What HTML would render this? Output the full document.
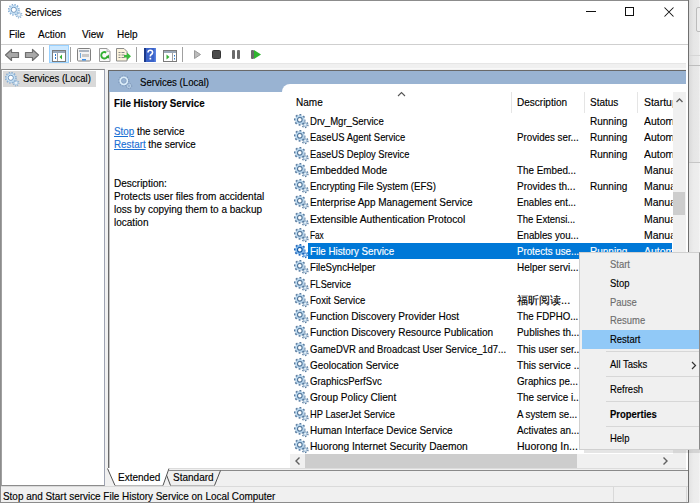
<!DOCTYPE html>
<html><head><meta charset="utf-8">
<style>
*{margin:0;padding:0;box-sizing:border-box}
html,body{width:700px;height:503px;overflow:hidden;background:#fff}
body{position:relative;font-family:"Liberation Sans",sans-serif;font-size:11px;letter-spacing:0;color:#000}
.a{position:absolute;white-space:nowrap}
.r{line-height:13px}
.r,.t{transform:scaleX(0.91);transform-origin:0 0;-webkit-text-stroke:0.15px}
.gear{width:15px;height:15px}
</style></head><body>
<svg width="0" height="0" style="position:absolute">
<defs>
<symbol id="gear" viewBox="0 0 15 15">
<circle cx="11.1" cy="10.7" r="2.9" fill="none" stroke="#5d7fa2" stroke-width="1.3" stroke-dasharray="1.5 1.54"/>
<circle cx="11.1" cy="10.7" r="2.1" fill="#b9d3e8" stroke="#5d7fa2" stroke-width="0.4"/>
<circle cx="11.1" cy="10.7" r="0.75" fill="#fff"/>
<circle cx="5.8" cy="5.8" r="5.0" fill="none" stroke="#57799d" stroke-width="1.7" stroke-dasharray="1.85 2.07" stroke-dashoffset="0.9"/>
<circle cx="5.8" cy="5.8" r="4.3" fill="#c6e3f8" stroke="#7fa6cb" stroke-width="0.5"/>
<circle cx="5.8" cy="5.8" r="2.35" fill="#fff" stroke="#587a9c" stroke-width="1.2"/>
</symbol>
<symbol id="gears" viewBox="0 0 15 15">
<circle cx="11.1" cy="10.7" r="2.9" fill="none" stroke="#2a72c6" stroke-width="1.3" stroke-dasharray="1.5 1.54"/>
<circle cx="11.1" cy="10.7" r="2.1" fill="#7ab4ea" stroke="#2a72c6" stroke-width="0.4"/>
<circle cx="11.1" cy="10.7" r="0.75" fill="#fff"/>
<circle cx="5.8" cy="5.8" r="5.0" fill="none" stroke="#1e64b8" stroke-width="1.7" stroke-dasharray="1.85 2.07" stroke-dashoffset="0.9"/>
<circle cx="5.8" cy="5.8" r="4.3" fill="#8cc4f2" stroke="#2f7fd4" stroke-width="0.5"/>
<circle cx="5.8" cy="5.8" r="2.35" fill="#fff" stroke="#155aa6" stroke-width="1.2"/>
</symbol>
<symbol id="gearh" viewBox="0 0 15 15">
<circle cx="11" cy="10.9" r="2.7" fill="none" stroke="#8199b8" stroke-width="1.1" stroke-dasharray="0.9 1.3"/>
<circle cx="11" cy="10.9" r="1.7" fill="none" stroke="#b9cfe4" stroke-width="0.9"/>
<circle cx="5.8" cy="5.8" r="5.0" fill="none" stroke="#7d99bb" stroke-width="1.3" stroke-dasharray="1.3 1.32"/>
<circle cx="5.8" cy="5.8" r="3.5" fill="none" stroke="#dcedf9" stroke-width="1.8"/>
<circle cx="5.8" cy="5.8" r="2.4" fill="none" stroke="#7f9cbd" stroke-width="0.6"/>
</symbol>
<symbol id="gearl" viewBox="0 0 15 15">
<circle cx="11" cy="10.9" r="2.9" fill="none" stroke="#8fb0d0" stroke-width="1.2" stroke-dasharray="0.95 1.33"/>
<circle cx="11" cy="10.9" r="2.2" fill="#c8def0" stroke="#8fb0d0" stroke-width="0.5"/>
<circle cx="11" cy="10.9" r="0.8" fill="#fff"/>
<circle cx="5.8" cy="5.8" r="5.2" fill="none" stroke="#86acd2" stroke-width="1.5" stroke-dasharray="1.35 1.37"/>
<circle cx="5.8" cy="5.8" r="4.4" fill="#cfe8fa" stroke="#95bde0" stroke-width="0.6"/>
<circle cx="5.8" cy="5.8" r="2.6" fill="#fff" stroke="#7196bd" stroke-width="1.0"/>
</symbol>
</defs></svg>

<!-- outside strip -->
<div class="a" style="left:689px;top:0;width:11px;height:162px;background:linear-gradient(to right,#d9d9d9,#e6e6e6 40%,#e9e9e9 90%,#f6f6f6)"></div>
<div class="a" style="left:689px;top:162px;width:11px;height:341px;background:linear-gradient(to right,#e2e2e2,#ececec 40%,#eeeeee 90%,#f8f8f8)"></div>
<div class="a" style="left:689px;top:162px;width:11px;height:1px;background:#c6c6c6"></div>
<div class="a" style="left:689px;top:55px;width:11px;height:1px;background:#d6d6d6"></div>
<div class="a" style="left:689px;top:65px;width:11px;height:1px;background:#bdbdbd"></div>
<div class="a" style="left:696px;top:7px;width:6px;height:25px;border:1px solid #bcbcbc;border-radius:2px;background:#eeeeee"></div>
<!-- window borders -->
<div class="a" style="left:0;top:0;width:689px;height:1px;background:#8c8c8c"></div>
<div class="a" style="left:0;top:0;width:1px;height:503px;background:#8c8c8c"></div>
<div class="a" style="left:688px;top:0;width:1px;height:503px;background:#6f6f6f"></div>

<!-- title -->
<div class="a r" style="left:25px;top:6px;transform:scaleX(0.865)">Services</div>


<!-- title icon -->
<svg class="a" style="left:8px;top:4px" width="15" height="15"><use href="#gearl"/></svg>
<!-- window controls -->
<div class="a" style="left:586px;top:11px;width:10px;height:1px;background:#111"></div>
<div class="a" style="left:625px;top:7px;width:9px;height:9px;border:1px solid #111"></div>
<svg class="a" style="left:663px;top:6px" width="12" height="12"><path d="M1.5 1.5 L10.5 10.5 M10.5 1.5 L1.5 10.5" stroke="#111" stroke-width="1.05"/></svg>

<!-- toolbar -->
<svg class="a" style="left:4px;top:48px" width="16" height="14"><path d="M1.5 7 L7.5 1.5 L7.5 4.5 L14.5 4.5 L14.5 9.5 L7.5 9.5 L7.5 12.5 Z" fill="#a8a8a8" stroke="#6e6e6e" stroke-width="1.2" stroke-linejoin="round"/></svg>
<svg class="a" style="left:24px;top:48px" width="16" height="14"><path d="M14.5 7 L8.5 1.5 L8.5 4.5 L1.5 4.5 L1.5 9.5 L8.5 9.5 L8.5 12.5 Z" fill="#a8a8a8" stroke="#6e6e6e" stroke-width="1.2" stroke-linejoin="round"/></svg>
<div class="a" style="left:43px;top:47px;width:1px;height:15px;background:#a0a0a0"></div>
<div class="a" style="left:49px;top:45px;width:20px;height:18px;background:#cce8ff;border:1px solid #99d1ff"></div>
<svg class="a" style="left:52px;top:50px" width="14" height="12"><rect x="0.5" y="0.5" width="13" height="11" fill="#fff" stroke="#7a7a7a"/><rect x="1" y="1" width="12" height="2" fill="#9aa8b8"/><rect x="3" y="4" width="1" height="2" fill="#2a7ad0"/><rect x="3" y="7" width="1" height="2" fill="#2a7ad0"/><rect x="5" y="3" width="1" height="8" fill="#a0a0a0"/><path d="M7.5 7 L10 4.5 L10 9.5 Z" fill="#35b035"/></svg>
<div class="a" style="left:70px;top:47px;width:1px;height:15px;background:#a0a0a0"></div>
<svg class="a" style="left:77px;top:48px" width="15" height="14"><rect x="0.5" y="0.5" width="13" height="12.5" rx="1" fill="#f4f4f4" stroke="#808080"/><rect x="2" y="2" width="10" height="2" fill="#aab4c0"/><rect x="3" y="5" width="1" height="5" fill="#6fa8dc"/><rect x="5" y="6" width="7" height="3" fill="#c8c8c8"/><rect x="5" y="11" width="4" height="1.5" fill="#3a8ee6"/></svg>
<svg class="a" style="left:98px;top:48px" width="14" height="14"><path d="M1.5 0.5 H9 L12 3.5 V13.5 H1.5 Z" fill="#fafafa" stroke="#9a9a9a"/><path d="M9 0.5 V3.5 H12" fill="#e0e0e0" stroke="#b0b0b0" stroke-width="0.8"/><path d="M8.2 4.6 A3.2 3.2 0 1 0 9.6 7.8" fill="none" stroke="#33b133" stroke-width="1.9"/><path d="M7.6 9.6 L10.8 6.6 L11.2 10.6 Z" fill="#2ea52e"/></svg>
<svg class="a" style="left:116px;top:48px" width="16" height="14"><path d="M0.5 0.5 H8 L11 3.5 V13 H0.5 Z" fill="#fbf3dc" stroke="#8a8a8a"/><rect x="2.5" y="4" width="2" height="1" fill="#888"/><rect x="5.5" y="4" width="3" height="1" fill="#888"/><rect x="2.5" y="6.5" width="2" height="1" fill="#888"/><rect x="5.5" y="6.5" width="3" height="1" fill="#888"/><rect x="2.5" y="9" width="2" height="1" fill="#888"/><rect x="5.5" y="9" width="3" height="1" fill="#888"/><path d="M8 7 H11 V4.5 L15 8.3 L11 12 V9.5 H8 Z" fill="#3cba3c"/></svg>
<div class="a" style="left:136px;top:47px;width:1px;height:15px;background:#a0a0a0"></div>
<svg class="a" style="left:144px;top:48px" width="12" height="14"><rect x="0" y="0" width="12" height="14" fill="#3b63c9"/><rect x="0" y="0" width="2" height="14" fill="#1c3a8a"/><rect x="10.5" y="0" width="1.5" height="14" fill="#5b83e0"/><path d="M4 4.5 Q4 2.3 6.3 2.3 Q8.6 2.3 8.6 4.4 Q8.6 5.8 7 6.7 Q6.3 7.2 6.3 8.6" fill="none" stroke="#fff" stroke-width="1.6"/><rect x="5.5" y="9.8" width="1.7" height="1.7" fill="#fff"/></svg>
<svg class="a" style="left:163px;top:50px" width="15" height="12"><rect x="0.5" y="0.5" width="13" height="11" fill="#fff" stroke="#7a7a7a"/><rect x="1" y="1" width="12" height="2" fill="#9aa8b8"/><rect x="9" y="3" width="1" height="8" fill="#a0a0a0"/><rect x="11" y="5" width="1" height="1.5" fill="#2a7ad0"/><rect x="11" y="8" width="1" height="1.5" fill="#2a7ad0"/><path d="M3.5 4.5 L6.5 7 L3.5 9.5 Z" fill="#35b035"/></svg>
<div class="a" style="left:182px;top:47px;width:1px;height:15px;background:#a0a0a0"></div>
<svg class="a" style="left:194px;top:50px" width="8" height="10"><path d="M0.5 0.5 L6.5 4.5 L0.5 8.5 Z" fill="#bcbcbc" stroke="#9a9a9a"/></svg>
<div class="a" style="left:212px;top:50px;width:9px;height:9px;background:#4a4a4a;border-radius:1.5px;border:1px solid #333"></div>
<div class="a" style="left:232px;top:50px;width:3px;height:9px;background:#6a6a6a;border-radius:1px"></div>
<div class="a" style="left:237px;top:50px;width:3px;height:9px;background:#6a6a6a;border-radius:1px"></div>
<div class="a" style="left:251px;top:50px;width:3px;height:9px;background:#6a6a6a;border-radius:1px"></div>
<svg class="a" style="left:254px;top:50px" width="8" height="10"><path d="M0 0 L7 4.5 L0 9 Z" fill="#2fb52f"/></svg>

<!-- menu -->
<div class="a r" style="left:9px;top:28px">File</div>
<div class="a r" style="left:38px;top:28px">Action</div>
<div class="a r" style="left:82px;top:28px">View</div>
<div class="a r" style="left:117px;top:28px">Help</div>
<div class="a" style="left:1px;top:44px;width:687px;height:1px;background:#cfcfcf"></div>

<!-- toolbar bottom band -->
<div class="a" style="left:1px;top:63px;width:687px;height:6px;background:#f0f0f0"></div>
<div class="a" style="left:1px;top:63px;width:687px;height:1px;background:#e6e6e6"></div>
<div class="a" style="left:105px;top:68px;width:583px;height:1px;background:#f8f8f8"></div>

<!-- gray area between panes & below -->
<div class="a" style="left:1px;top:69px;width:687px;height:433px;background:#f0f0f0"></div>

<!-- left pane -->
<div class="a" style="left:1px;top:69px;width:104px;height:417px;background:#fff;border:1px solid #8c8c8c;border-left-color:#a0a0a0;border-right-color:#9ea3b2"></div>
<div class="a" style="left:3px;top:71px;width:93px;height:16px;background:#d9d9d9"></div>
<svg class="a" style="left:5px;top:72px" width="15" height="15"><use href="#gearl"/></svg>
<div class="a t" style="left:23px;top:72px;transform:scaleX(0.86)">Services (Local)</div>

<!-- right pane -->
<div class="a" style="left:686px;top:63px;width:2px;height:407px;background:#fff"></div>
<div class="a" style="left:108px;top:70px;width:578px;height:398px;background:#fff;border-left:1px solid #696969"></div>
<div class="a" style="left:109px;top:70px;width:577px;height:1px;background:#696969"></div>
<div class="a" style="left:109px;top:71px;width:577px;height:21px;background:#99b3d2"></div>
<div class="a" style="left:282px;top:84px;width:404px;height:20px;background:#fff;border-top-left-radius:8px"></div>
<div class="a" style="left:109px;top:92px;width:1px;height:376px;background:#c4c4c4"></div>
<svg class="a" style="left:118px;top:75px" width="15" height="15"><use href="#gearh"/></svg>
<div class="a r" style="left:140px;top:76px;transform:scaleX(0.875)">Services (Local)</div>

<!-- description panel -->
<div class="a t" style="left:114px;top:97px;font-weight:bold;transform:scaleX(0.887)">File History Service</div>
<div class="a t" style="left:114px;top:125px;transform:scaleX(0.892)"><span style="color:#1a6fd4;text-decoration:underline">Stop</span> the service</div>
<div class="a t" style="left:114px;top:138px;transform:scaleX(0.892)"><span style="color:#1a6fd4;text-decoration:underline">Restart</span> the service</div>
<div class="a t" style="left:114px;top:177px;line-height:13px">Description:<br>Protects user files from accidental<br>loss by copying them to a backup<br>location</div>


<!-- list view -->
<div class="a" style="left:511px;top:92px;width:1px;height:21px;background:#e5e5e5"></div>
<div class="a" style="left:584px;top:92px;width:1px;height:21px;background:#e5e5e5"></div>
<div class="a" style="left:637px;top:92px;width:1px;height:21px;background:#e5e5e5"></div>
<div class="a r" style="left:296px;top:96px">Name</div>
<div class="a r" style="left:517px;top:96px">Description</div>
<div class="a r" style="left:590px;top:96px">Status</div>
<div class="a r" style="left:644px;top:96px;width:29.5px;overflow:hidden;transform:scaleX(0.95)">Startup</div>
<svg class="a" style="left:397px;top:91px" width="9" height="6"><path d="M1 5 L4.5 1.5 L8 5" fill="none" stroke="#555" stroke-width="1.1"/></svg>
<!--ROWS-->
<svg class="a" style="left:294px;top:114px" width="15" height="15"><use href="#gear"/></svg>
<div class="a r" style="left:310px;top:115px;color:#000;transform:scaleX(0.8674)">Drv_Mgr_Service</div>
<div class="a r" style="left:590px;top:115px;color:#000">Running</div>
<div class="a r" style="left:644px;top:115px;width:29.5px;overflow:hidden;color:#000;transform:scaleX(0.95)">Autom</div>
<svg class="a" style="left:294px;top:130px" width="15" height="15"><use href="#gear"/></svg>
<div class="a r" style="left:310px;top:131px;color:#000;transform:scaleX(0.8559)">EaseUS Agent Service</div>
<div class="a r" style="left:517px;top:131px;color:#000;transform:scaleX(0.8854)">Provides ser...</div>
<div class="a r" style="left:590px;top:131px;color:#000">Running</div>
<div class="a r" style="left:644px;top:131px;width:29.5px;overflow:hidden;color:#000;transform:scaleX(0.95)">Autom</div>
<svg class="a" style="left:294px;top:147px" width="15" height="15"><use href="#gear"/></svg>
<div class="a r" style="left:310px;top:148px;color:#000;transform:scaleX(0.8462)">EaseUS Deploy Srevice</div>
<div class="a r" style="left:590px;top:148px;color:#000">Running</div>
<div class="a r" style="left:644px;top:148px;width:29.5px;overflow:hidden;color:#000;transform:scaleX(0.95)">Autom</div>
<svg class="a" style="left:294px;top:163px" width="15" height="15"><use href="#gear"/></svg>
<div class="a r" style="left:310px;top:164px;color:#000;transform:scaleX(0.922)">Embedded Mode</div>
<div class="a r" style="left:517px;top:164px;color:#000;transform:scaleX(0.8946)">The Embed...</div>
<div class="a r" style="left:644px;top:164px;width:29.5px;overflow:hidden;color:#000;transform:scaleX(0.95)">Manua</div>
<svg class="a" style="left:294px;top:179px" width="15" height="15"><use href="#gear"/></svg>
<div class="a r" style="left:310px;top:180px;color:#000;transform:scaleX(0.8725)">Encrypting File System (EFS)</div>
<div class="a r" style="left:517px;top:180px;color:#000;transform:scaleX(0.91)">Provides th...</div>
<div class="a r" style="left:590px;top:180px;color:#000">Running</div>
<div class="a r" style="left:644px;top:180px;width:29.5px;overflow:hidden;color:#000;transform:scaleX(0.95)">Manua</div>
<svg class="a" style="left:294px;top:195px" width="15" height="15"><use href="#gear"/></svg>
<div class="a r" style="left:310px;top:196px;color:#000;transform:scaleX(0.9072)">Enterprise App Management Service</div>
<div class="a r" style="left:517px;top:196px;color:#000;transform:scaleX(0.8757)">Enables ent...</div>
<div class="a r" style="left:644px;top:196px;width:29.5px;overflow:hidden;color:#000;transform:scaleX(0.95)">Manua</div>
<svg class="a" style="left:294px;top:212px" width="15" height="15"><use href="#gear"/></svg>
<div class="a r" style="left:310px;top:213px;color:#000;transform:scaleX(0.9341)">Extensible Authentication Protocol</div>
<div class="a r" style="left:517px;top:213px;color:#000;transform:scaleX(0.8652)">The Extensi...</div>
<div class="a r" style="left:644px;top:213px;width:29.5px;overflow:hidden;color:#000;transform:scaleX(0.95)">Manua</div>
<svg class="a" style="left:294px;top:228px" width="15" height="15"><use href="#gear"/></svg>
<div class="a r" style="left:310px;top:229px;color:#000;transform:scaleX(0.7494)">Fax</div>
<div class="a r" style="left:517px;top:229px;color:#000;transform:scaleX(0.8854)">Enables you...</div>
<div class="a r" style="left:644px;top:229px;width:29.5px;overflow:hidden;color:#000;transform:scaleX(0.95)">Manua</div>
<div class="a" style="left:308px;top:243px;width:364px;height:16px;background:#0078d7"></div>
<svg class="a" style="left:294px;top:244px" width="15" height="15"><use href="#gears"/></svg>
<div class="a r" style="left:310px;top:245px;color:#fff;transform:scaleX(0.8878)">File History Service</div>
<div class="a r" style="left:517px;top:245px;color:#fff;transform:scaleX(0.8827)">Protects use...</div>
<div class="a r" style="left:590px;top:245px;color:#fff">Running</div>
<div class="a r" style="left:644px;top:245px;width:29.5px;overflow:hidden;color:#fff;transform:scaleX(0.95)">Autom</div>
<svg class="a" style="left:294px;top:260px" width="15" height="15"><use href="#gear"/></svg>
<div class="a r" style="left:310px;top:261px;color:#000;transform:scaleX(0.8779)">FileSyncHelper</div>
<div class="a r" style="left:517px;top:261px;color:#000;transform:scaleX(0.9055)">Helper servi...</div>
<svg class="a" style="left:294px;top:277px" width="15" height="15"><use href="#gear"/></svg>
<div class="a r" style="left:310px;top:278px;color:#000;transform:scaleX(0.8291)">FLService</div>
<svg class="a" style="left:294px;top:293px" width="15" height="15"><use href="#gear"/></svg>
<div class="a r" style="left:310px;top:294px;color:#000;transform:scaleX(0.8692)">Foxit Service</div>
<div class="a r" style="left:517px;top:294px;color:#000;transform:scaleX(1.001)">福昕阅读...</div>
<svg class="a" style="left:294px;top:309px" width="15" height="15"><use href="#gear"/></svg>
<div class="a r" style="left:310px;top:310px;color:#000;transform:scaleX(0.9136)">Function Discovery Provider Host</div>
<div class="a r" style="left:517px;top:310px;color:#000;transform:scaleX(0.8792)">The FDPHO...</div>
<svg class="a" style="left:294px;top:325px" width="15" height="15"><use href="#gear"/></svg>
<div class="a r" style="left:310px;top:326px;color:#000;transform:scaleX(0.913)">Function Discovery Resource Publication</div>
<div class="a r" style="left:517px;top:326px;color:#000;transform:scaleX(0.9026)">Publishes th...</div>
<svg class="a" style="left:294px;top:342px" width="15" height="15"><use href="#gear"/></svg>
<div class="a r" style="left:310px;top:343px;color:#000;transform:scaleX(0.8642)">GameDVR and Broadcast User Service_1d7...</div>
<div class="a r" style="left:517px;top:343px;color:#000;transform:scaleX(0.9026)">This user ser...</div>
<svg class="a" style="left:294px;top:358px" width="15" height="15"><use href="#gear"/></svg>
<div class="a r" style="left:310px;top:359px;color:#000;transform:scaleX(0.9008)">Geolocation Service</div>
<div class="a r" style="left:517px;top:359px;color:#000;transform:scaleX(0.9175)">This service ...</div>
<svg class="a" style="left:294px;top:374px" width="15" height="15"><use href="#gear"/></svg>
<div class="a r" style="left:310px;top:375px;color:#000;transform:scaleX(0.8688)">GraphicsPerfSvc</div>
<div class="a r" style="left:517px;top:375px;color:#000;transform:scaleX(0.8909)">Graphics pe...</div>
<svg class="a" style="left:294px;top:390px" width="15" height="15"><use href="#gear"/></svg>
<div class="a r" style="left:310px;top:391px;color:#000;transform:scaleX(0.9164)">Group Policy Client</div>
<div class="a r" style="left:517px;top:391px;color:#000;transform:scaleX(0.9026)">The service i...</div>
<svg class="a" style="left:294px;top:407px" width="15" height="15"><use href="#gear"/></svg>
<div class="a r" style="left:310px;top:408px;color:#000;transform:scaleX(0.848)">HP LaserJet Service</div>
<div class="a r" style="left:517px;top:408px;color:#000;transform:scaleX(0.8792)">A system se...</div>
<svg class="a" style="left:294px;top:423px" width="15" height="15"><use href="#gear"/></svg>
<div class="a r" style="left:310px;top:424px;color:#000;transform:scaleX(0.9043)">Human Interface Device Service</div>
<div class="a r" style="left:517px;top:424px;color:#000;transform:scaleX(0.9026)">Activates an...</div>
<svg class="a" style="left:294px;top:439px" width="15" height="15"><use href="#gear"/></svg>
<div class="a r" style="left:310px;top:440px;color:#000;transform:scaleX(0.9283)">Huorong Internet Security Daemon</div>
<div class="a r" style="left:517px;top:440px;color:#000;transform:scaleX(0.9563)">Huorong In...</div>
<!--/ROWS-->
<!-- vertical scrollbar -->
<div class="a" style="left:673px;top:92px;width:13px;height:362px;background:#f0f0f0"></div>
<div class="a" style="left:673px;top:192px;width:12px;height:23px;background:#cdcdcd"></div>
<svg class="a" style="left:675px;top:96px" width="9" height="8"><path d="M1.5 6 L4.5 3 L7.5 6" fill="none" stroke="#606060" stroke-width="1.4"/></svg>
<!-- horizontal scrollbar -->
<div class="a" style="left:290px;top:454px;width:396px;height:14px;background:#f0f0f0"></div>
<div class="a" style="left:305px;top:454px;width:272px;height:14px;background:#cdcdcd"></div>
<svg class="a" style="left:293px;top:456px" width="9" height="10"><path d="M6.5 1.5 L3 5 L6.5 8.5" fill="none" stroke="#606060" stroke-width="1.4"/></svg>
<svg class="a" style="left:661px;top:456px" width="9" height="10"><path d="M2.5 1.5 L6 5 L2.5 8.5" fill="none" stroke="#606060" stroke-width="1.4"/></svg>


<!-- tabs -->
<div class="a" style="left:109px;top:468px;width:577px;height:1px;background:#dcdcdc"></div>
<div class="a" style="left:109px;top:470px;width:579px;height:1px;background:#8a8a8a"></div>
<svg class="a" style="left:105px;top:468px" width="130" height="19">
<path d="M59 2 L66 17.5 L109.5 17.5 L116 2 Z" fill="#f0f0f0"/>
<path d="M58 2.5 H130" stroke="#8a8a8a"/>
<path d="M65.5 17.5 L109.5 17.5" stroke="#b8b8b8"/>
<path d="M60 3 L65.5 17.5 M109.5 17.5 L115.5 2.5" fill="none" stroke="#505050"/>
<path d="M2 0 L9.5 17.5 L58.5 17.5 L65 0 Z" fill="#fff"/>
<path d="M10 17.5 L58 17.5" stroke="#b8b8b8"/>
<path d="M2.5 0.5 L10 17.5 M58 17.5 L64 0.5" fill="none" stroke="#505050"/>
</svg>
<div class="a r" style="left:118px;top:471px">Extended</div>
<div class="a r" style="left:173px;top:471px">Standard</div>

<!-- context menu -->
<div class="a" style="left:584px;top:450px;width:116px;height:3px;background:rgba(0,0,0,0.10)"></div>
<div class="a" style="left:579px;top:252px;width:121px;height:198px;background:#f0f0f0;border:1px solid #d0d0d0;border-right:1px solid #8a8a8a"></div>
<div class="a" style="left:582px;top:330px;width:117px;height:19px;background:#91c9f7"></div>
<div class="a r" style="left:610px;top:258px;color:#6d6d6d;transform:scaleX(0.86)">Start</div>
<div class="a r" style="left:610px;top:277px;transform:scaleX(0.86)">Stop</div>
<div class="a r" style="left:610px;top:296px;color:#6d6d6d;transform:scaleX(0.86)">Pause</div>
<div class="a r" style="left:610px;top:314px;color:#6d6d6d;transform:scaleX(0.86)">Resume</div>
<div class="a r" style="left:610px;top:333px;transform:scaleX(0.86)">Restart</div>
<div class="a" style="left:606px;top:351px;width:93px;height:1px;background:#d7d7d7"></div>
<div class="a r" style="left:610px;top:358px;transform:scaleX(0.86)">All Tasks</div>
<svg class="a" style="left:691px;top:361px" width="6" height="9"><path d="M1 1 L4.5 4.5 L1 8" fill="none" stroke="#333" stroke-width="1.2"/></svg>
<div class="a" style="left:606px;top:376px;width:93px;height:1px;background:#d7d7d7"></div>
<div class="a r" style="left:610px;top:383px;transform:scaleX(0.86)">Refresh</div>
<div class="a" style="left:606px;top:401px;width:93px;height:1px;background:#d7d7d7"></div>
<div class="a r" style="left:610px;top:408px;font-weight:bold;transform:scaleX(0.86)">Properties</div>
<div class="a" style="left:606px;top:426px;width:93px;height:1px;background:#d7d7d7"></div>
<div class="a r" style="left:610px;top:432px;transform:scaleX(0.86)">Help</div>

<!-- status bar -->
<div class="a" style="left:1px;top:486px;width:687px;height:1px;background:#dadada"></div>
<div class="a" style="left:613px;top:487px;width:1px;height:15px;background:#d9d9d9"></div>
<div class="a" style="left:686px;top:487px;width:1px;height:15px;background:#d9d9d9"></div>
<div class="a t" style="left:3px;top:490px;transform:scaleX(0.902)">Stop and Start service File History Service on Local Computer</div>
<div class="a" style="left:0;top:502px;width:689px;height:1px;background:#8c8c8c"></div>

</body></html>
